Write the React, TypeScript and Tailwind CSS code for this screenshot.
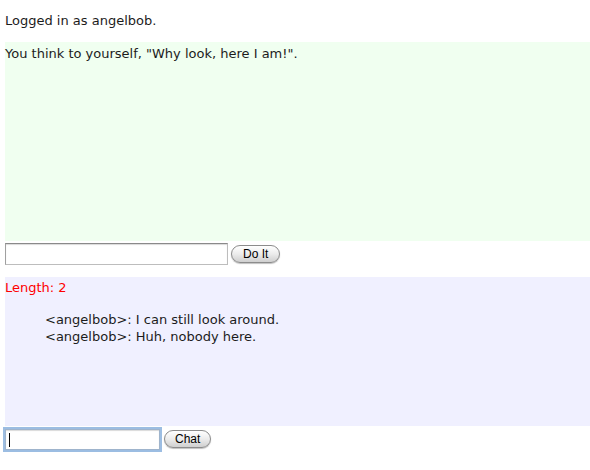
export default function App() {
    return (
        <main className="w-[590px] h-[470px] bg-white pl-[5px] pt-[12px] text-[13px] leading-[17px] text-[#1c1c1c] font-['DejaVu_Sans',Verdana,sans-serif]">
            <p className="h-[30px]">Logged in as angelbob.</p>

            {/* Room output */}
            <section className="h-[199px] bg-[#f0fff0] pt-[3px]">
                <p>You think to yourself, "Why look, here I am!".</p>
            </section>

            <form className="flex items-center h-[23px] mt-px gap-[3px]">
                <input
                    type="text"
                    className="w-[223px] h-[22px] bg-white border border-[#bdbdbd] border-t-[#8a8a8a] border-l-[#a0a0a0] shadow-[inset_0_1px_1px_rgba(0,0,0,0.15)] outline-none"
                />
                <button
                    type="button"
                    className="h-[18px] px-[11px] rounded-full border border-[#8c8c8c] bg-gradient-to-b from-white via-[#ececec] to-[#cfcfcf] shadow-[0_1px_1px_rgba(0,0,0,0.25)] text-[12px] leading-none text-black font-['Liberation_Sans',Arial,sans-serif]"
                >
                    Do It
                </button>
            </form>

            {/* Chat log */}
            <section className="mt-[12px] h-[149px] bg-[#f0f0ff] pt-[2px]">
                <p className="text-[#ff0000]">Length: 2</p>
                <ul className="mt-[15px] pl-[40px]">
                    <li>&lt;angelbob&gt;: I can still look around.</li>
                    <li>&lt;angelbob&gt;: Huh, nobody here.</li>
                </ul>
            </section>

            <form className="flex items-center h-[24px] mt-[1px] gap-[4px]">
                <div className="relative">
                    <input
                        type="text"
                        className="block w-[155px] h-[21px] bg-white border border-[#9fb4cc] shadow-[0_0_0_2px_#9cbde2,inset_0_1px_1px_rgba(0,0,0,0.15)] outline-none pl-[3px]"
                    />
                    <span className="absolute left-[4px] top-[4px] w-px h-[14px] bg-black" />
                </div>
                <button
                    type="button"
                    className="h-[18px] px-[10px] rounded-full border border-[#8c8c8c] bg-gradient-to-b from-white via-[#ececec] to-[#cfcfcf] shadow-[0_1px_1px_rgba(0,0,0,0.25)] text-[12px] leading-none text-black font-['Liberation_Sans',Arial,sans-serif]"
                >
                    Chat
                </button>
            </form>
        </main>
    );
}
